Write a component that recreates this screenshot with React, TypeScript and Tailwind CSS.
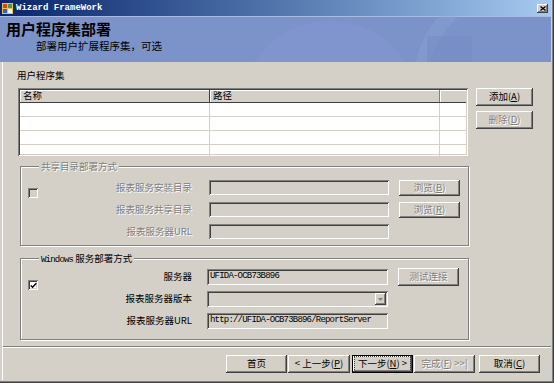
import type { ReactNode } from 'react'

const raised =
  'bg-[#d4d0c8] shadow-[inset_-1px_-1px_#404040,inset_1px_1px_#ffffff,inset_-2px_-2px_#808080,inset_2px_2px_#d4d0c8]'
const sunken =
  'shadow-[inset_1px_1px_#808080,inset_-1px_-1px_#ffffff,inset_2px_2px_#404040,inset_-2px_-2px_#d4d0c8]'
const etched = 'border border-[#808080] shadow-[inset_1px_1px_#ffffff,1px_1px_#ffffff]'
const grayText = 'text-[#808080] [text-shadow:1px_1px_0_#ffffff]'
const cjk = "font-['Noto_Sans_CJK_SC','Liberation_Sans',sans-serif]"
const mono = "font-['Liberation_Mono','Noto_Sans_CJK_SC',monospace]"

function Btn({
  children,
  className = '',
  disabled = false,
  isDefault = false,
}: {
  children: ReactNode
  className?: string
  disabled?: boolean
  isDefault?: boolean
}) {
  return (
    <div
      className={`${raised} ${isDefault ? 'border border-black' : ''} flex shrink-0 items-center justify-center ${cjk} text-[9.5px] leading-none ${disabled ? grayText : 'text-black'} ${className}`}
    >
      {isDefault ? (
        <span className="border border-dotted border-[#404040] px-[3px] py-[2px]">{children}</span>
      ) : (
        children
      )}
    </div>
  )
}

function Field({ children, className = '' }: { children?: ReactNode; className?: string }) {
  return (
    <div
      className={`${sunken} flex shrink-0 items-center bg-[#d4d0c8] pl-[3px] ${mono} text-[9px] tracking-[-0.8px] text-black ${className}`}
    >
      {children}
    </div>
  )
}

function Label({ children, disabled = false }: { children: ReactNode; disabled?: boolean }) {
  return (
    <div
      className={`w-[154px] shrink-0 text-right ${cjk} text-[9.5px] leading-none ${disabled ? grayText : 'text-black'}`}
    >
      {children}
    </div>
  )
}

function AppIcon() {
  return (
    <svg width="11" height="11" viewBox="0 0 11 11">
      <rect x="0" y="0" width="11" height="11" fill="#f0c040" />
      <rect x="1" y="1" width="4" height="4" fill="#e04020" />
      <rect x="6" y="1" width="4" height="4" fill="#40a040" />
      <rect x="1" y="6" width="4" height="4" fill="#3060d0" />
      <rect x="6" y="6" width="4" height="4" fill="#ffffff" />
    </svg>
  )
}

export default function App() {
  const rows = [0, 1, 2, 3]
  return (
    <div className="flex h-[383px] w-[554px] flex-col overflow-hidden bg-[#d4d0c8] pr-[3px] pb-[3px] shadow-[inset_-1px_-1px_#404040,inset_-2px_-2px_#808080]">
      {/* title bar */}
      <div className="flex h-[16px] shrink-0 items-center bg-linear-to-r from-[#0a246a] to-[#a6caf0] pl-[2px] pr-[3px]">
        <AppIcon />
        <span className={`ml-[3px] ${mono} text-[9px] font-bold leading-none text-white`}>
          Wizard FrameWork
        </span>
        <div className={`${raised} ml-auto flex h-[9px] w-[11px] items-center justify-center`}>
          <svg width="6" height="5" viewBox="0 0 6 5">
            <path d="M0.5 0.5 L5.5 4.5 M5.5 0.5 L0.5 4.5" stroke="#000" strokeWidth="1.3" />
          </svg>
        </div>
      </div>

      {/* header */}
      <div className="relative h-[46px] shrink-0 overflow-hidden bg-[#7c93ca]">
        <svg className="absolute inset-0" width="551" height="46" viewBox="0 0 551 46">
          <rect x="0" y="0" width="551" height="1" fill="#a9bbe3" />
          <circle cx="330" cy="95" r="90" fill="#849ad0" opacity="0.45" />
          <circle cx="520" cy="70" r="100" fill="none" stroke="#90a5d6" strokeWidth="14" opacity="0.35" />
          <rect x="427" y="20" width="45" height="26" fill="#7188c2" opacity="0.4" />
        </svg>
        <div className="relative pl-[6px] pt-[4px]">
          <div className={`${cjk} text-[15px] font-bold leading-[17px] text-black`}>用户程序集部署</div>
          <div className={`${cjk} mt-[3px] pl-[30px] text-[10.5px] leading-[12px] text-black`}>
            部署用户扩展程序集，可选
          </div>
        </div>
      </div>

      {/* body */}
      <div className="ml-[2px] flex flex-1 flex-col border-l border-white">
        <div className="flex flex-col pl-[15px]">
          <div className={`${cjk} mt-[7px] -ml-[1px] text-[9.5px] leading-[12px] text-black`}>用户程序集</div>

          <div className="mt-[7px] flex">
            {/* list */}
            <div className={`h-[68px] w-[450px] shrink-0 overflow-hidden bg-white p-[2px] ${sunken}`}>
              <div className="grid h-[13px] grid-cols-[190px_230px_26px] border-b border-[#404040] bg-[#d4d0c8]">
                <div className={`flex items-center border-r border-[#404040] pl-[3px] ${cjk} text-[9.5px] leading-none shadow-[inset_1px_1px_#ffffff]`}>
                  名称
                </div>
                <div className={`flex items-center border-r border-[#808080] pl-[3px] ${cjk} text-[9.5px] leading-none shadow-[inset_1px_1px_#ffffff]`}>
                  路径
                </div>
                <div className="shadow-[inset_1px_1px_#ffffff]" />
              </div>
              {rows.map((r) => (
                <div key={r} className="grid h-[14px] grid-cols-[190px_230px_26px] border-b border-[#d4d0c8]">
                  <div className="border-r border-[#d4d0c8]" />
                  <div className="border-r border-[#d4d0c8]" />
                  <div />
                </div>
              ))}
            </div>

            <div className="ml-[8px] flex flex-col gap-[5px]">
              <Btn className="h-[18px] w-[57px]">
                添加(<u>A</u>)
              </Btn>
              <Btn className="h-[18px] w-[57px]" disabled>
                删除(<u>D</u>)
              </Btn>
            </div>
          </div>

          {/* group 1 */}
          <div className={`relative ml-[2px] mt-[10px] h-[80px] w-[449px] ${etched}`}>
            <div className={`absolute -top-[7px] left-[18px] bg-[#d4d0c8] px-[2px] ${cjk} text-[9.5px] leading-[12px] ${grayText}`}>
              共享目录部署方式
            </div>
            <div className="flex pl-[7px]">
              <div className={`mt-[21px] h-[10px] w-[10px] shrink-0 bg-[#d4d0c8] ${sunken}`} />
              <div className="flex flex-col gap-[7px] pt-[13px]">
                <div className="flex h-[15px] items-center">
                  <Label disabled>报表服务安装目录</Label>
                  <Field className="ml-[17px] h-[15px] w-[180px]" />
                  <Btn className="ml-[10px] h-[16px] w-[61px]" disabled>
                    浏览(<u>B</u>)
                  </Btn>
                </div>
                <div className="flex h-[15px] items-center">
                  <Label disabled>报表服务共享目录</Label>
                  <Field className="ml-[17px] h-[15px] w-[180px]" />
                  <Btn className="ml-[10px] h-[16px] w-[61px]" disabled>
                    浏览(<u>R</u>)
                  </Btn>
                </div>
                <div className="flex h-[15px] items-center">
                  <Label disabled>报表服务器URL</Label>
                  <Field className="ml-[17px] h-[15px] w-[180px]" />
                </div>
              </div>
            </div>
          </div>

          {/* group 2 */}
          <div className={`relative ml-[2px] mt-[12px] h-[82px] w-[449px] ${etched}`}>
            <div className={`absolute -top-[7px] left-[18px] flex items-baseline bg-[#d4d0c8] px-[2px] text-[9.5px] leading-[12px] text-black`}>
              <span className={`${mono} text-[9px] tracking-[-0.8px]`}>Windows</span>
              <span className={`${cjk} ml-[2px]`}>服务部署方式</span>
            </div>
            <div className="flex pl-[7px]">
              <div className={`mt-[21px] flex h-[10px] w-[10px] shrink-0 items-center justify-center bg-white ${sunken}`}>
                <svg width="7" height="7" viewBox="0 0 7 7">
                  <path d="M0.8 3.4 L2.6 5.3 L6.3 1.2" fill="none" stroke="#000" strokeWidth="1.4" />
                </svg>
              </div>
              <div className="flex flex-col gap-[6px] pt-[10px]">
                <div className="flex h-[16px] items-center">
                  <Label>服务器</Label>
                  <Field className="ml-[15px] h-[16px] w-[181px]">UFIDA-OCB73B896</Field>
                  <Btn className="ml-[10px] h-[18px] w-[61px]" disabled>
                    测试连接
                  </Btn>
                </div>
                <div className="flex h-[16px] items-center">
                  <Label>报表服务器版本</Label>
                  <Field className="ml-[15px] h-[16px] w-[181px] justify-end pr-[2px]">
                    <div className={`${raised} flex h-[12px] w-[11px] items-center justify-center`}>
                      <svg width="5" height="3" viewBox="0 0 5 3">
                        <path d="M0 0 H5 L2.5 3 Z" fill="#808080" />
                      </svg>
                    </div>
                  </Field>
                </div>
                <div className="flex h-[16px] items-center">
                  <Label>报表服务器URL</Label>
                  <Field className="ml-[15px] h-[16px] w-[181px]">http://UFIDA-OCB73B896/ReportServer</Field>
                </div>
              </div>
            </div>
          </div>
        </div>

        {/* separator */}
        <div className="mt-[6px] h-[2px] border-t border-b border-t-[#808080] border-b-white" />

        {/* footer */}
        <div className="mt-[7px] flex pl-[223px]">
          <Btn className="h-[18px] w-[61px]">首页</Btn>
          <Btn className="ml-[1px] h-[18px] w-[62px]">
            &lt; 上一步(<u>P</u>)
          </Btn>
          <Btn className="ml-[2px] h-[18px] w-[61px]" isDefault>
            下一步(<u>N</u>) &gt;
          </Btn>
          <Btn className="ml-[1px] h-[18px] w-[61px]" disabled>
            完成(<u>F</u>) &gt;&gt;|
          </Btn>
          <Btn className="ml-[4px] h-[18px] w-[61px]">
            取消(<u>C</u>)
          </Btn>
        </div>
      </div>
    </div>
  )
}
